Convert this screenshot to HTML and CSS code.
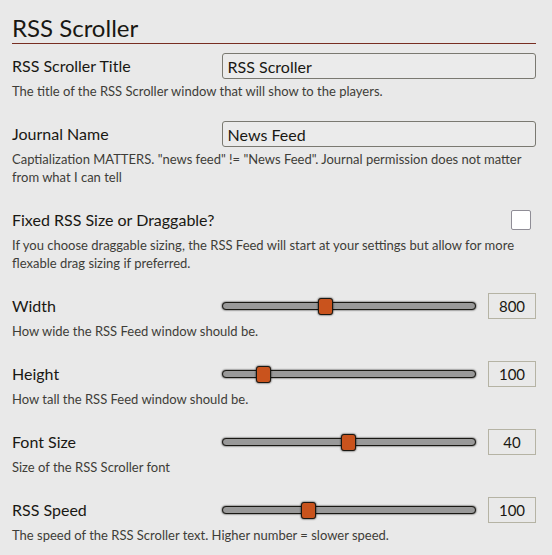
FILE: index.html
```html
<!DOCTYPE html>
<html>
<head>
<meta charset="utf-8">
<link rel="stylesheet" href="styles.css">
</head>
<body>
<div class="settings">
  <h2 class="module-header">RSS Scroller</h2>

  <div class="form-group">
    <label class="label">RSS Scroller Title</label>
    <div class="field"><input class="text-input" type="text" value="RSS Scroller"></div>
    <p class="notes">The title of the RSS Scroller window that will show to the players.</p>
  </div>

  <div class="form-group">
    <label class="label">Journal Name</label>
    <div class="field"><input class="text-input" type="text" value="News Feed"></div>
    <p class="notes">Captialization MATTERS. "news feed" != "News Feed". Journal permission does not matter from what I can tell</p>
  </div>

  <div class="form-group">
    <label class="label">Fixed RSS Size or Draggable?</label>
    <div class="field check-field"><span class="checkbox"></span></div>
    <p class="notes">If you choose draggable sizing, the RSS Feed will start at your settings but allow for more flexable drag sizing if preferred.</p>
  </div>

  <div class="form-group">
    <label class="label">Width</label>
    <div class="field range-field">
      <input class="range" type="range" min="0" max="100" value="40">
      <span class="range-value">800</span>
    </div>
    <p class="notes">How wide the RSS Feed window should be.</p>
  </div>

  <div class="form-group">
    <label class="label">Height</label>
    <div class="field range-field">
      <input class="range" type="range" min="0" max="100" value="14">
      <span class="range-value">100</span>
    </div>
    <p class="notes">How tall the RSS Feed window should be.</p>
  </div>

  <div class="form-group">
    <label class="label">Font Size</label>
    <div class="field range-field">
      <input class="range" type="range" min="0" max="100" value="50">
      <span class="range-value">40</span>
    </div>
    <p class="notes">Size of the RSS Scroller font</p>
  </div>

  <div class="form-group">
    <label class="label">RSS Speed</label>
    <div class="field range-field">
      <input class="range" type="range" min="0" max="100" value="33">
      <span class="range-value">100</span>
    </div>
    <p class="notes">The speed of the RSS Scroller text. Higher number = slower speed.</p>
  </div>
</div>
</body>
</html>
```

FILE: styles.css
```css
html, body {
  margin: 0;
  padding: 0;
  background: #e9e9e9;
}
body {
  font-family: "Lato", "Open Sans", sans-serif;
  color: #191813;
}
.settings {
  padding: 0 16px 0 12px;
}
.module-header {
  margin: 0;
  padding-top: 14px;
  font-size: 24px;
  line-height: 28px;
  font-weight: normal;
  color: #191813;
  border-bottom: 1px solid #782e22;
  padding-bottom: 1px;
  margin-bottom: 9px;
}
.form-group {
  display: flex;
  flex-wrap: wrap;
  align-items: center;
  margin-bottom: 21px;
}
.label {
  flex: 2;
  font-size: 16px;
  line-height: 26px;
}
.field {
  flex: 3;
  display: flex;
  align-items: center;
  height: 26px;
}
.text-input {
  width: 100%;
  height: 26px;
  box-sizing: border-box;
  margin: 0;
  padding: 1px 5px;
  border: 1px solid #7a7971;
  border-radius: 3px;
  background: rgba(255,255,255,0.1);
  font-family: inherit;
  font-size: 16px;
  color: #191813;
  outline: none;
}
.check-field {
  justify-content: flex-end;
  padding-right: 5px;
}
.checkbox {
  width: 18px;
  height: 18px;
  background: #fff;
  border: 1px solid #8f8d96;
  border-radius: 2px;
}
.notes {
  flex: 0 0 100%;
  margin: 3px 0 0 0;
  font-size: 13px;
  line-height: 18px;
  color: #3e3d38;
}
.range-field {
  gap: 12px;
}
.range {
  -webkit-appearance: none;
  appearance: none;
  flex: 1;
  margin: 0;
  height: 18px;
  background: transparent;
}
.range::-webkit-slider-runnable-track {
  height: 8px;
  background: #999;
  border: 1px solid #191813;
  border-radius: 4px;
  box-shadow: 0 0 2px #000;
}
.range::-webkit-slider-thumb {
  -webkit-appearance: none;
  width: 15px;
  height: 17px;
  margin-top: -5px;
  background: #c9531d;
  border: 1px solid #191813;
  border-radius: 3px;
  box-shadow: 0 0 2px #000;
}
.range-value {
  flex: 0 0 48px;
  box-sizing: border-box;
  height: 26px;
  line-height: 24px;
  border: 1px solid #b5b3a4;
  text-align: center;
  font-size: 15px;
}
```
